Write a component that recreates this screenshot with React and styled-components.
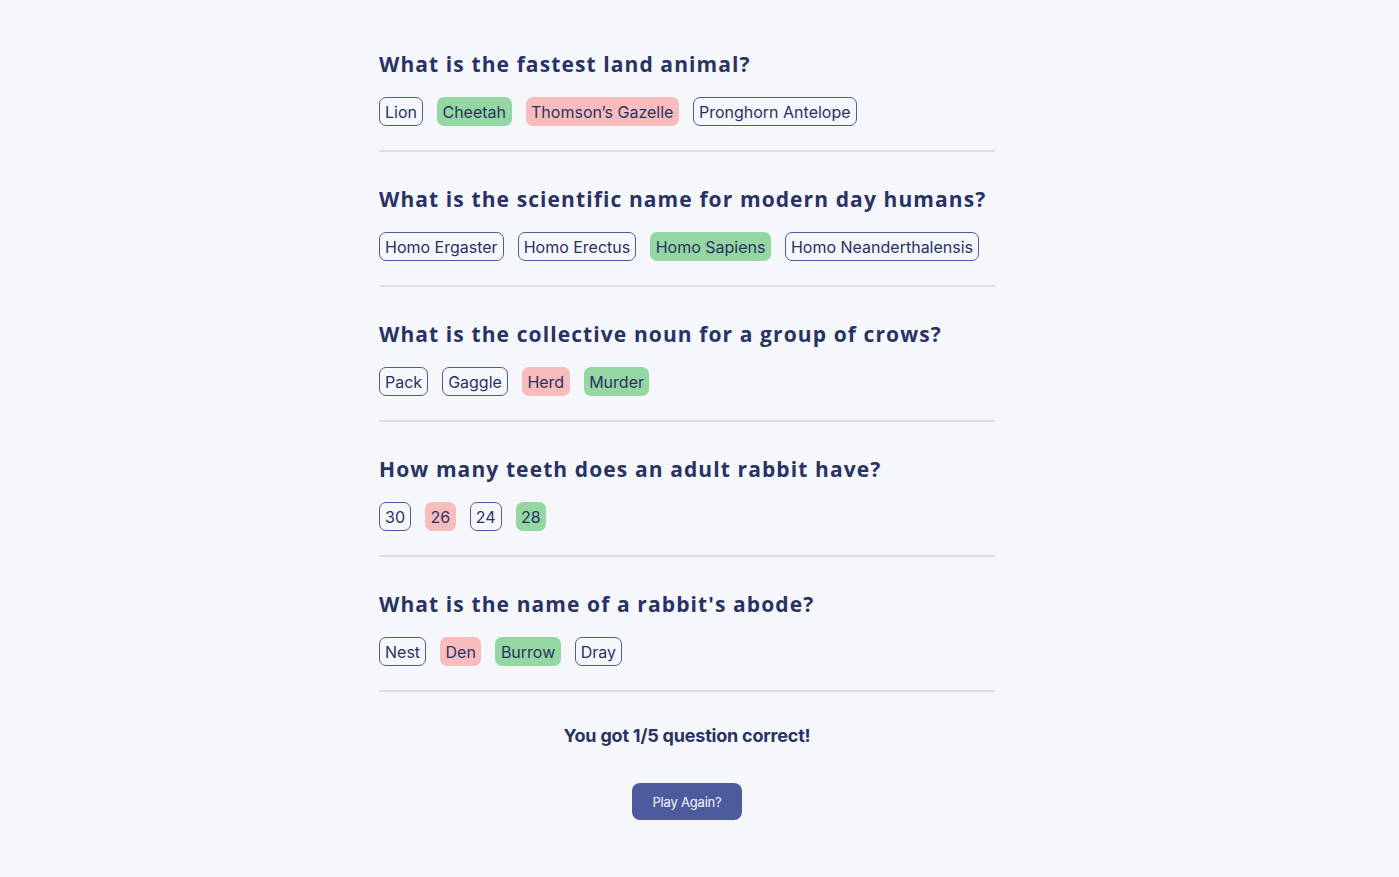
import React from 'react';
import styled, { createGlobalStyle } from 'styled-components';

const GlobalStyle = createGlobalStyle`
  body {
    margin: 0;
    background: #F5F7FB;
    font-family: Inter, "Liberation Sans", sans-serif;
    color: #293264;
  }
`

const Page = styled.main`
  min-height: 877px;
  display: flex;
  justify-content: center;
  padding-right: 25px;
  box-sizing: border-box;
`

const Quiz = styled.div`
  width: 616px;
  padding-top: 50px;
  display: flex;
  flex-direction: column;
`

const Question = styled.section`
  border-bottom: 2px solid #DBDEF0;
  padding-bottom: 24px;
  margin-bottom: 33px;
`

const Title = styled.h2`
  font-family: "Open Sans", Lato, sans-serif;
  font-weight: 700;
  font-size: 21px;
  letter-spacing: 1.1px;
  line-height: 28px;
  margin: 0 0 19px;
`

const Answers = styled.div`
  display: flex;
  gap: 14px;
`

const Answer = styled.button`
  font-family: Inter, "Liberation Sans", sans-serif;
  font-size: 16px;
  color: #293264;
  padding: 0 ${p => (p.$state ? '5.5px' : '5px')};
  height: 29px;
  border-radius: 7px;
  border: ${p => (p.$state ? 'none' : '1px solid #4D5B9E')};
  background: ${p =>
    p.$state === 'correct' ? '#94D7A2' : p.$state === 'wrong' ? '#F8BCBC' : 'transparent'};
`

const Footer = styled.div`
  display: flex;
  flex-direction: column;
  align-items: center;
  gap: 37px;
`

const Score = styled.p`
  margin: 0;
  font-weight: 700;
  font-size: 18px;
  letter-spacing: -0.2px;
`

const PlayAgain = styled.button`
  width: 110px;
  height: 37px;
  border: none;
  border-radius: 8px;
  background: #4D5B9E;
  color: #F5F7FB;
  font-family: Inter, Roboto, sans-serif;
  font-size: 13px;
  letter-spacing: -0.2px;
`

const questions = [
  {
    q: 'What is the fastest land animal?',
    a: [['Lion'], ['Cheetah', 'correct'], ['Thomson’s Gazelle', 'wrong'], ['Pronghorn Antelope']],
  },
  {
    q: 'What is the scientific name for modern day humans?',
    a: [['Homo Ergaster'], ['Homo Erectus'], ['Homo Sapiens', 'correct'], ['Homo Neanderthalensis']],
  },
  {
    q: 'What is the collective noun for a group of crows?',
    a: [['Pack'], ['Gaggle'], ['Herd', 'wrong'], ['Murder', 'correct']],
  },
  {
    q: 'How many teeth does an adult rabbit have?',
    a: [['30'], ['26', 'wrong'], ['24'], ['28', 'correct']],
  },
  {
    q: "What is the name of a rabbit's abode?",
    a: [['Nest'], ['Den', 'wrong'], ['Burrow', 'correct'], ['Dray']],
  },
]

export default function App() {
  return (
    <>
      <GlobalStyle />
      <Page>
        <Quiz>
          {questions.map(item => (
            <Question key={item.q}>
              <Title>{item.q}</Title>
              <Answers>
                {item.a.map(([text, state]) => (
                  <Answer key={text} $state={state}>{text}</Answer>
                ))}
              </Answers>
            </Question>
          ))}
          <Footer>
            <Score>You got 1/5 question correct!</Score>
            <PlayAgain>Play Again?</PlayAgain>
          </Footer>
        </Quiz>
      </Page>
    </>
  )
}
